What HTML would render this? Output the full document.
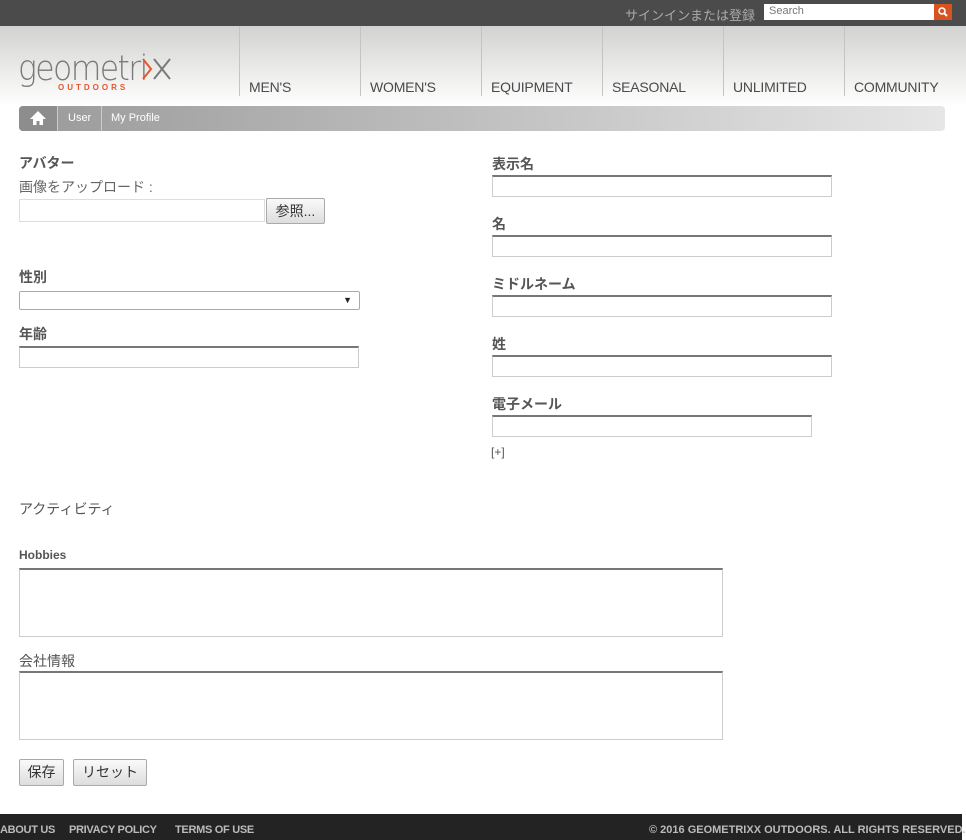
<!DOCTYPE html>
<html><head><meta charset="utf-8"><style>
*{margin:0;padding:0;box-sizing:border-box}
body{width:966px;height:840px;position:relative;background:#fff;font-family:"Liberation Sans","Noto Sans CJK JP",sans-serif;overflow:hidden;color:#555}
.a{position:absolute}
.top{left:0;top:0;width:966px;height:26px;background:#4b4b4b}
.hdr{left:0;top:26px;width:966px;height:80px;background:linear-gradient(#d2d2d0,#fff)}
.div{top:26px;width:1px;height:70px;background:#c4c4c4}
.nav{top:79px;font-size:14px;color:#4a4a4a;letter-spacing:-0.2px}
.bc{left:19px;top:106px;width:926px;height:25px;border-radius:4px;background:linear-gradient(90deg,#9a9a9a,#e6e6e6)}
.lbl{font-size:14px;font-weight:bold;color:#555}
.in{height:22px;border:1px solid #ccc;border-top:2px solid #777;background:#fff}
.btn{border:1px solid #aaa;background:linear-gradient(#fafafa,#ddd);font-size:14px;color:#333;text-align:center;border-radius:2px}
.ft{left:0;top:814px;width:962px;height:26px;background:#232323;font-size:11px;color:#bbb}
.fx{top:824px;font-size:11px;color:#bbb;font-weight:bold;letter-spacing:-0.3px}
</style></head><body>
<div class="a top"></div>
<div class="a" style="left:625px;top:5px;font-size:13px;color:#aaa">サインインまたは登録</div>
<div class="a" style="left:764px;top:4px;width:170px;height:16px;background:#fff;font-size:11px;color:#777;padding:1px 5px">Search</div>
<div class="a" style="left:934px;top:4px;width:18px;height:16px;background:#d9531e"><svg width="18" height="16"><circle cx="8" cy="7" r="3" fill="none" stroke="#fff" stroke-width="1.6"/><line x1="10.3" y1="9.3" x2="13" y2="12" stroke="#fff" stroke-width="2"/></svg></div>
<div class="a hdr"></div>
<div class="a" style="left:18px;top:49px;font-size:35px;color:#7a7a7a;letter-spacing:-1.8px;font-family:'DejaVu Sans','Liberation Sans',sans-serif;font-weight:200;transform:scaleX(0.9);transform-origin:left">geometri</div>
<svg class="a" style="left:142px;top:58px" width="32" height="24"><path d="M1 1 L9 11 L1 21" fill="none" stroke="#e8572a" stroke-width="2"/><path d="M12 1 L28 21 M28 1 L12 21" fill="none" stroke="#7a7a7a" stroke-width="2"/></svg>
<div class="a" style="left:58px;top:83px;font-size:8px;font-weight:bold;color:#e8572a;letter-spacing:3px">OUTDOORS</div>
<div class="a div" style="left:239px"></div><div class="a div" style="left:360px"></div><div class="a div" style="left:481px"></div><div class="a div" style="left:602px"></div><div class="a div" style="left:723px"></div><div class="a div" style="left:844px"></div>
<div class="a nav" style="left:249px">MEN'S</div>
<div class="a nav" style="left:370px">WOMEN'S</div>
<div class="a nav" style="left:491px">EQUIPMENT</div>
<div class="a nav" style="left:612px">SEASONAL</div>
<div class="a nav" style="left:733px">UNLIMITED</div>
<div class="a nav" style="left:854px">COMMUNITY</div>
<div class="a bc"></div>
<div class="a" style="left:19px;top:106px;width:38px;height:25px;background:#8d8d8d;border-radius:4px 0 0 4px"><svg width="38" height="25"><path d="M19 5 L11 13 H14 V19 H17.5 V15 H20.5 V19 H24 V13 H27 Z" fill="#fff"/></svg></div>
<div class="a" style="left:57px;top:106px;width:1px;height:25px;background:#ccc"></div>
<div class="a" style="left:101px;top:106px;width:1px;height:25px;background:#ccc"></div>
<div class="a" style="left:68px;top:112px;font-size:11px;color:#fff">User</div>
<div class="a" style="left:111px;top:112px;font-size:11px;color:#fff">My Profile</div>

<div class="a lbl" style="left:19px;top:153px">アバター</div>
<div class="a" style="left:19px;top:177px;font-size:14px;color:#666">画像をアップロード :</div>
<div class="a" style="left:19px;top:199px;width:246px;height:23px;border:1px solid #ddd"></div>
<div class="a btn" style="left:266px;top:198px;width:59px;height:26px;line-height:24px">参照...</div>
<div class="a lbl" style="left:19px;top:267px">性別</div>
<div class="a" style="left:19px;top:291px;width:341px;height:19px;border:1px solid #aaa;border-radius:2px;font-size:9px;text-align:right;padding-right:7px;line-height:17px;color:#222">▼</div>
<div class="a lbl" style="left:19px;top:324px">年齢</div>
<div class="a in" style="left:19px;top:346px;width:340px"></div>

<div class="a lbl" style="left:492px;top:154px">表示名</div>
<div class="a in" style="left:492px;top:175px;width:340px"></div>
<div class="a lbl" style="left:492px;top:214px">名</div>
<div class="a in" style="left:492px;top:235px;width:340px"></div>
<div class="a lbl" style="left:492px;top:274px">ミドルネーム</div>
<div class="a in" style="left:492px;top:295px;width:340px"></div>
<div class="a lbl" style="left:492px;top:334px">姓</div>
<div class="a in" style="left:492px;top:355px;width:340px"></div>
<div class="a lbl" style="left:492px;top:394px">電子メール</div>
<div class="a in" style="left:492px;top:415px;width:320px"></div>
<div class="a" style="left:491px;top:445px;font-size:12px;color:#555">[+]</div>

<div class="a" style="left:19px;top:499px;font-size:14px;color:#555">アクティビティ</div>
<div class="a" style="left:19px;top:548px;font-size:12px;font-weight:bold;color:#555">Hobbies</div>
<div class="a in" style="left:19px;top:568px;width:704px;height:69px"></div>
<div class="a" style="left:19px;top:651px;font-size:14px;color:#555">会社情報</div>
<div class="a in" style="left:19px;top:671px;width:704px;height:69px"></div>
<div class="a btn" style="left:19px;top:759px;width:45px;height:27px;line-height:25px">保存</div>
<div class="a btn" style="left:73px;top:759px;width:74px;height:27px;line-height:25px">リセット</div>

<div class="a ft"></div>
<div class="a fx" style="left:0">ABOUT US</div>
<div class="a fx" style="left:69px">PRIVACY POLICY</div>
<div class="a fx" style="left:175px">TERMS OF USE</div>
<div class="a fx" style="left:649px;letter-spacing:0">© 2016 GEOMETRIXX OUTDOORS. ALL RIGHTS RESERVED.</div>
</body></html>
